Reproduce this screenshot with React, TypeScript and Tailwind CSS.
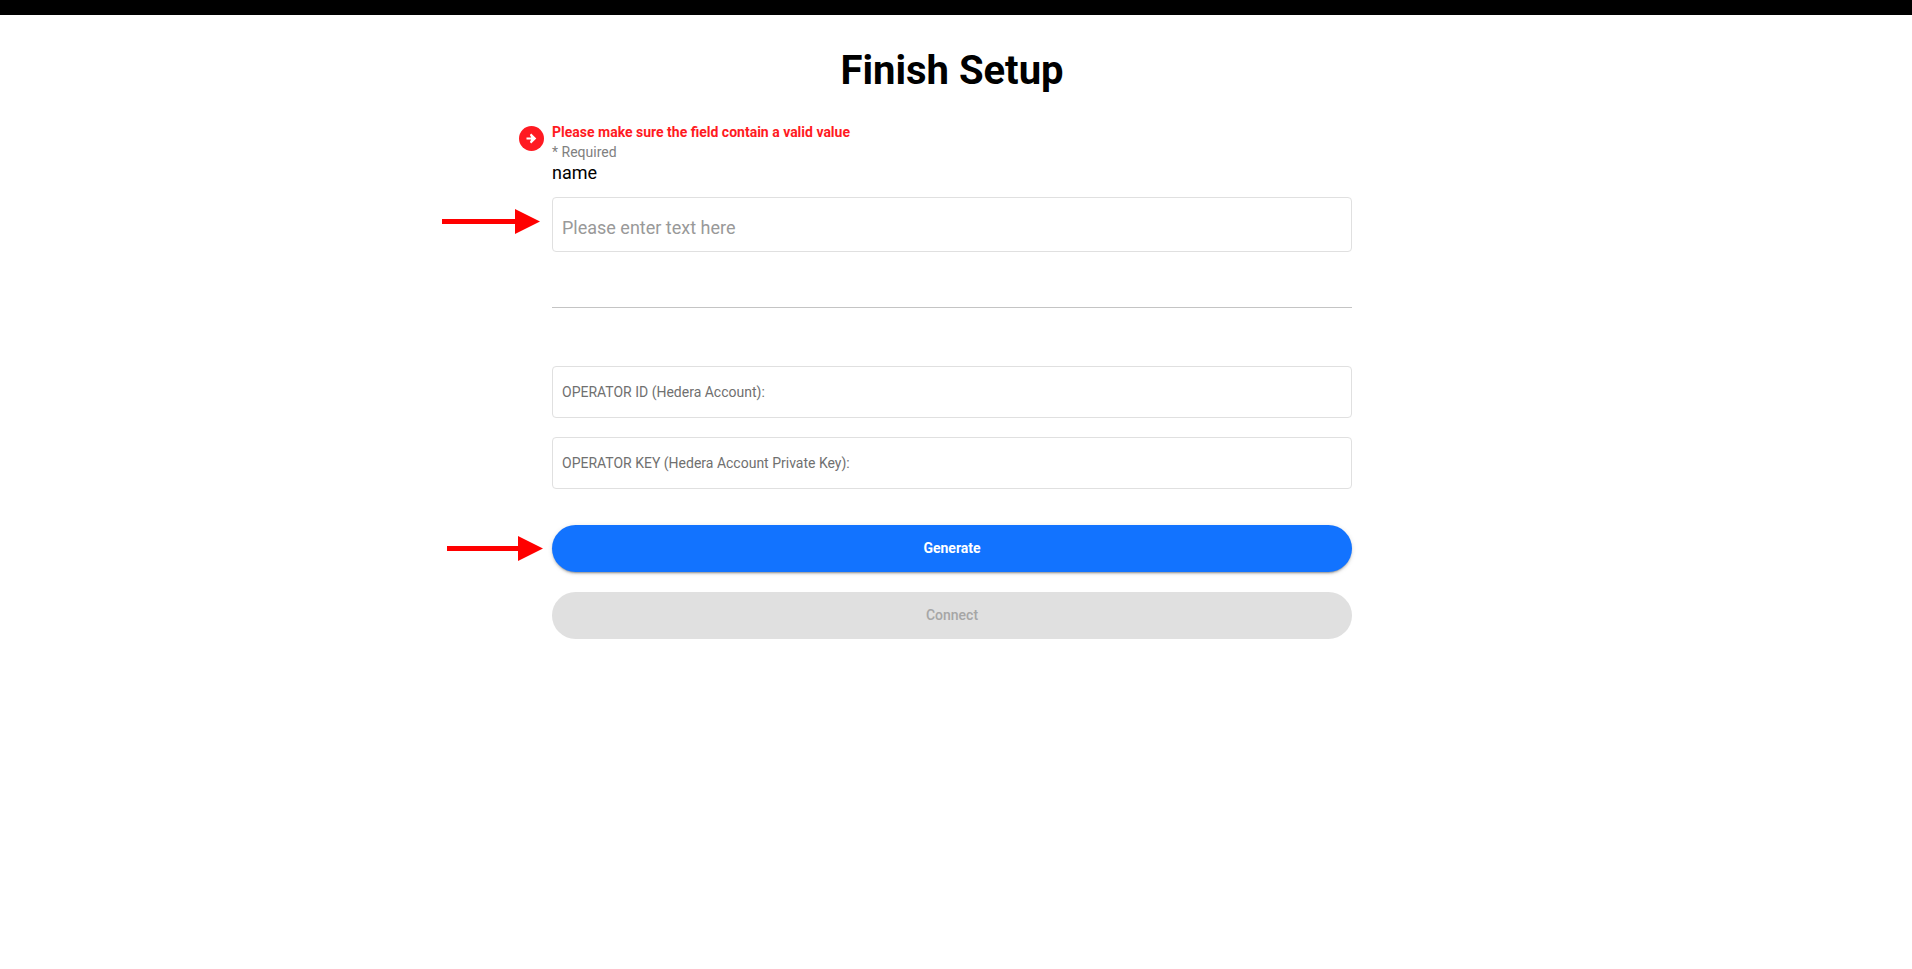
import React from "react";

function RedArrow({ length }: { length: number }) {
  const head = length - 25;
  return (
    <svg width={length} height="25" viewBox={`0 0 ${length} 25`} aria-hidden="true">
      <path d={`M0 10H${head}V0L${length} 12.5L${head} 25V15H0Z`} fill="#ff0000" />
    </svg>
  );
}

function AlertIcon() {
  return (
    <svg width="25" height="25" viewBox="0 0 25 25" aria-hidden="true">
      <circle cx="12.5" cy="12.5" r="12.5" fill="#ff1a22" />
      <path
        d="M7.5 11.5H12.2L10.9 9L12.2 7.5L17.3 12.5L12.2 17.5L10.9 16L12.2 13.6H7.5Z"
        fill="#ffffff"
      />
    </svg>
  );
}

function OutlinedField({ id, label }: { id: string; label: string }) {
  return (
    <div className="flex h-[52px] items-center gap-2 rounded border border-[#e0e0e0] px-[9px]">
      <label htmlFor={id} className="text-sm text-[#707070]">
        {label}
      </label>
      <input id={id} type="text" className="h-full min-w-0 flex-1 text-sm outline-none" />
    </div>
  );
}

export default function App() {
  return (
    <div className="min-h-screen bg-white font-[Roboto,sans-serif] text-black">
      <header className="h-[15px] bg-black" />
      <main className="pr-2">
        <form className="mx-auto flex max-w-[800px] flex-col" onSubmit={(e) => e.preventDefault()}>
          <h1 className="pt-8 text-center text-[40px] leading-[48px] font-bold">Finish Setup</h1>

          <div className="relative mt-[27px] flex flex-col">
            <span className="absolute top-1 right-full mr-2">
              <AlertIcon />
            </span>
            <p className="text-sm leading-5 font-bold text-[#ff1a22]">
              Please make sure the field contain a valid value
            </p>
            <p className="text-sm leading-5 text-[#808080]">* Required</p>
            <label htmlFor="name" className="text-lg leading-[22px]">
              name
            </label>
          </div>

          <div className="relative mt-[13px]">
            <span className="absolute top-3 right-full mr-3">
              <RedArrow length={98} />
            </span>
            <input
              id="name"
              type="text"
              placeholder="Please enter text here"
              className="block h-[55px] w-full rounded border border-[#e0e0e0] px-[9px] pt-1.5 text-lg outline-none placeholder:text-[#999999]"
            />
          </div>

          <hr className="mt-[55px] border-[#c4c4c4]" />

          <div className="mt-[58px] flex flex-col gap-[19px]">
            <OutlinedField id="operator-id" label="OPERATOR ID (Hedera Account):" />
            <OutlinedField id="operator-key" label="OPERATOR KEY (Hedera Account Private Key):" />
          </div>

          <div className="mt-9 flex flex-col gap-5">
            <div className="relative">
              <span className="absolute top-[11px] right-full mr-[9px]">
                <RedArrow length={96} />
              </span>
              <button
                type="submit"
                className="block h-[47px] w-full rounded-full bg-[#1273ff] pb-0.5 text-sm font-bold text-white shadow-[0_3px_1px_-2px_rgba(0,0,0,0.2),0_2px_2px_0_rgba(0,0,0,0.14),0_1px_5px_0_rgba(0,0,0,0.12)]"
              >
                Generate
              </button>
            </div>
            <button
              type="button"
              disabled
              className="h-[47px] w-full rounded-full bg-[#e0e0e0] pb-0.5 text-sm font-medium text-[#a6a6a6]"
            >
              Connect
            </button>
          </div>
        </form>
      </main>
    </div>
  );
}
